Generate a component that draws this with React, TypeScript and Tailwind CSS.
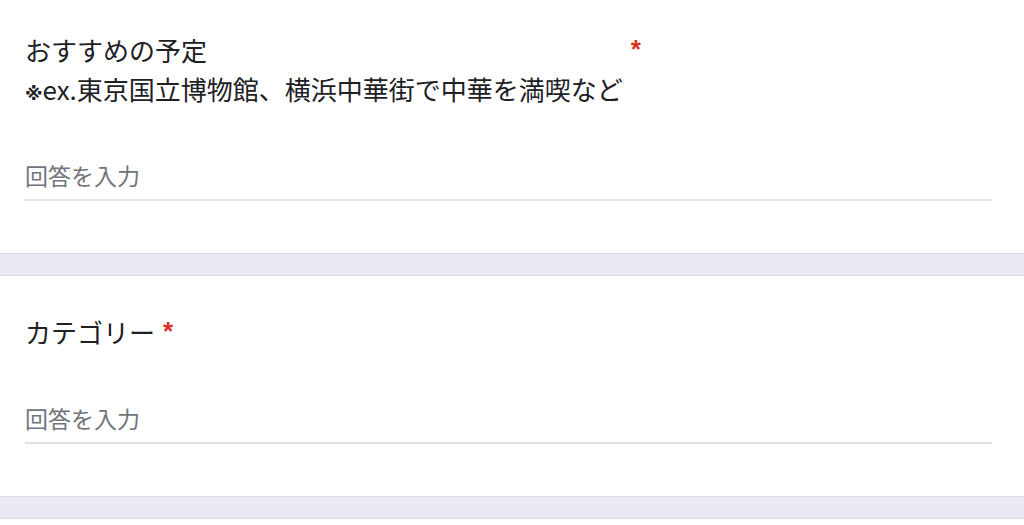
const font = {
  fontFamily: '"Noto Sans CJK JP", "Noto Sans", sans-serif',
};

function Question({
  title,
  subtitle,
}: {
  title: string;
  subtitle?: React.ReactNode;
}) {
  return (
    <div className="bg-white px-[25px]">
      <div className="flex items-start">
        <div className="text-[26px] leading-[40px] text-[#202124]">
          <div className="h-[40px]">{title}</div>
          {subtitle && <div className="-mt-[1px] h-[40px]">{subtitle}</div>}
        </div>
        <span
          className="ml-[8px] mt-[6px] text-[26px] font-bold leading-[26px] text-[#d93025]"
          style={{ fontFamily: '"Liberation Sans", sans-serif' }}
        >
          *
        </span>
      </div>
      <div className="mt-[51px] w-[967px] border-b-2 border-[#e2e2e2] pb-[9px] text-[23px] leading-[30px] text-[#70757a]">
        回答を入力
      </div>
    </div>
  );
}

function Band() {
  return <div className="h-[23px] border-y border-[#d8d8dd] bg-[#ebe9f3]" />;
}

export default function App() {
  return (
    <div className="h-[525px] w-[1024px] overflow-hidden bg-white" style={font}>
      <div className="pt-[30px] pb-[52px]">
        <Question
          title="おすすめの予定"
          subtitle={
            <>
              <span
                className="text-[18px] font-bold leading-none"
                style={{ fontFamily: '"DejaVu Sans", sans-serif' }}
              >
                ※
              </span>
              ex.東京国立博物館、横浜中華街で中華を満喫など
            </>
          }
        />
      </div>
      <Band />
      <div className="pt-[36px] pb-[52px]">
        <Question title="カテゴリー" />
      </div>
      <Band />
    </div>
  );
}
